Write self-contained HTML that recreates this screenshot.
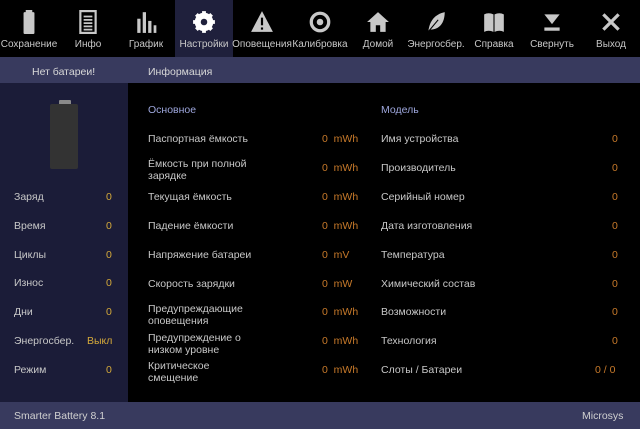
<!DOCTYPE html><html><head><meta charset="utf-8"><style>
*{margin:0;padding:0;box-sizing:border-box}
body{width:640px;height:429px;background:#000;font-family:"Liberation Sans","DejaVu Sans",sans-serif;color:#c8c8c8;position:relative;overflow:hidden;font-size:10px}
.nav{position:absolute;top:0;left:0;width:640px;height:57px;background:#000}
.it{position:absolute;top:0;width:58px;height:57px;text-align:center}
.it.sel{background:#1f203c}
.it svg{position:absolute;left:18px;top:10px;width:22px;height:24px}
.it span{position:absolute;left:-10px;right:-10px;top:39px;font-size:10px;color:#c8c8c8;white-space:nowrap}
.strip{position:absolute;top:57px;left:0;width:640px;height:26px;background:#383a5e;color:#d8d8d8}
.left{position:absolute;top:83px;left:0;width:128px;height:319px;background:#1b1c38}
.foot{position:absolute;top:402px;left:0;width:640px;height:27px;background:#383a5e;color:#d0d0d0}
.t{position:absolute;font-size:10.5px;line-height:12px;white-space:nowrap;margin-top:2px}
.o{color:#c87a2a}.y{color:#d4a93a}.h{color:#9da6dc}
</style></head><body>
<div class="nav">
<div class="it" style="left:0"><svg viewBox="0 0 20 22"><rect x="7" y="0" width="6" height="3" fill="#c8c8c8"/><rect x="5" y="2" width="10" height="20" rx="1" fill="#c8c8c8"/></svg><span>Сохранение</span></div>
<div class="it" style="left:59px"><svg viewBox="0 0 20 22"><rect x="3" y="1" width="14" height="20" fill="none" stroke="#c8c8c8" stroke-width="2"/><path d="M6 6h8M6 9h8M6 12h8M6 15h8M6 18h8" stroke="#c8c8c8" stroke-width="1.6"/></svg><span>Инфо</span></div>
<div class="it" style="left:117px"><svg viewBox="0 0 20 22"><rect x="2" y="8" width="3" height="13" fill="#c8c8c8"/><rect x="7" y="2" width="3" height="19" fill="#c8c8c8"/><rect x="12" y="10" width="3" height="11" fill="#c8c8c8"/><rect x="17" y="14" width="2.5" height="7" fill="#c8c8c8"/></svg><span>График</span></div>
<div class="it sel" style="left:175px"><svg viewBox="0 0 20 22"><circle cx="10" cy="11" r="6.5" fill="none" stroke="#fff" stroke-width="4"/><g stroke="#fff" stroke-width="3.5"><path d="M10 1v20M0 11h20M3 4l14 14M17 4L3 18"/></g><circle cx="10" cy="11" r="3" fill="#1f203c"/></svg><span>Настройки</span></div>
<div class="it" style="left:233px"><svg viewBox="0 0 20 22"><path d="M10 1L20 20H0z" fill="#c8c8c8"/><rect x="9" y="7" width="2" height="7" fill="#000"/><rect x="9" y="16" width="2" height="2" fill="#000"/></svg><span>Оповещения</span></div>
<div class="it" style="left:291px"><svg viewBox="0 0 20 22"><circle cx="10" cy="11" r="8" fill="none" stroke="#c8c8c8" stroke-width="3"/><circle cx="10" cy="11" r="3" fill="#c8c8c8"/></svg><span>Калибровка</span></div>
<div class="it" style="left:349px"><svg viewBox="0 0 20 22"><path d="M10 2L0 11h3v9h5v-6h4v6h5v-9h3z" fill="#c8c8c8"/></svg><span>Домой</span></div>
<div class="it" style="left:407px"><svg viewBox="0 0 20 22"><path d="M3 20C4 10 9 4 18 2C18 12 13 18 5 18z" fill="#c8c8c8"/><path d="M2 21L12 9" stroke="#000" stroke-width="1"/></svg><span>Энергосбер.</span></div>
<div class="it" style="left:465px"><svg viewBox="0 0 20 22"><path d="M1 4Q5 2 9.5 4V20Q5 18 1 20z M10.5 4Q15 2 19 4V20Q15 18 10.5 20z" fill="#c8c8c8"/></svg><span>Справка</span></div>
<div class="it" style="left:523px"><svg viewBox="0 0 20 22"><path d="M3 4h14l-7 9z" fill="#c8c8c8"/><rect x="3" y="16" width="14" height="3" fill="#c8c8c8"/></svg><span>Свернуть</span></div>
<div class="it" style="left:582px"><svg viewBox="0 0 20 22"><path d="M3 4l14 14M17 4L3 18" stroke="#c8c8c8" stroke-width="3"/></svg><span>Выход</span></div>
</div>
<div class="strip"><div class="t" style="left:32px;top:7px">Нет батареи!</div><div class="t" style="left:148px;top:7px">Информация</div></div>
<div class="left">
<div style="position:absolute;left:59px;top:17px;width:12px;height:5px;background:#8a8a8a;border-radius:1px"></div>
<div style="position:absolute;left:50px;top:21px;width:28px;height:65px;background:#333;border-radius:2px"></div>
</div>
<div class="t" style="left:14px;top:189px">Заряд</div><div class="t y" style="left:106px;top:189px">0</div>
<div class="t" style="left:14px;top:218px">Время</div><div class="t y" style="left:106px;top:218px">0</div>
<div class="t" style="left:14px;top:247px">Циклы</div><div class="t y" style="left:106px;top:247px">0</div>
<div class="t" style="left:14px;top:275px">Износ</div><div class="t y" style="left:106px;top:275px">0</div>
<div class="t" style="left:14px;top:304px">Дни</div><div class="t y" style="left:106px;top:304px">0</div>
<div class="t" style="left:14px;top:333px">Энергосбер.</div><div class="t y" style="left:87px;top:333px">Выкл</div>
<div class="t" style="left:14px;top:362px">Режим</div><div class="t y" style="left:106px;top:362px">0</div>

<div class="t h" style="left:148px;top:102px">Основное</div>
<div class="t h" style="left:381px;top:102px">Модель</div>

<div class="t" style="left:148px;top:131px">Паспортная ёмкость</div>
<div class="t" style="left:148px;top:156px">Ёмкость при полной<br>зарядке</div>
<div class="t" style="left:148px;top:189px">Текущая ёмкость</div>
<div class="t" style="left:148px;top:218px">Падение ёмкости</div>
<div class="t" style="left:148px;top:247px">Напряжение батареи</div>
<div class="t" style="left:148px;top:276px">Скорость зарядки</div>
<div class="t" style="left:148px;top:301px">Предупреждающие<br>оповещения</div>
<div class="t" style="left:148px;top:330px">Предупреждение о<br>низком уровне</div>
<div class="t" style="left:148px;top:358px">Критическое<br>смещение</div>

<div class="t o" style="left:322px;top:131px">0&nbsp; mWh</div>
<div class="t o" style="left:322px;top:160px">0&nbsp; mWh</div>
<div class="t o" style="left:322px;top:189px">0&nbsp; mWh</div>
<div class="t o" style="left:322px;top:218px">0&nbsp; mWh</div>
<div class="t o" style="left:322px;top:247px">0&nbsp; mV</div>
<div class="t o" style="left:322px;top:276px">0&nbsp; mW</div>
<div class="t o" style="left:322px;top:304px">0&nbsp; mWh</div>
<div class="t o" style="left:322px;top:333px">0&nbsp; mWh</div>
<div class="t o" style="left:322px;top:362px">0&nbsp; mWh</div>

<div class="t" style="left:381px;top:131px">Имя устройства</div>
<div class="t" style="left:381px;top:160px">Производитель</div>
<div class="t" style="left:381px;top:189px">Серийный номер</div>
<div class="t" style="left:381px;top:218px">Дата изготовления</div>
<div class="t" style="left:381px;top:247px">Температура</div>
<div class="t" style="left:381px;top:276px">Химический состав</div>
<div class="t" style="left:381px;top:304px">Возможности</div>
<div class="t" style="left:381px;top:333px">Технология</div>
<div class="t" style="left:381px;top:362px">Слоты / Батареи</div>
<div class="t o" style="left:612px;top:131px">0</div>
<div class="t o" style="left:612px;top:160px">0</div>
<div class="t o" style="left:612px;top:189px">0</div>
<div class="t o" style="left:612px;top:218px">0</div>
<div class="t o" style="left:612px;top:247px">0</div>
<div class="t o" style="left:612px;top:276px">0</div>
<div class="t o" style="left:612px;top:304px">0</div>
<div class="t o" style="left:612px;top:333px">0</div>
<div class="t o" style="left:595px;top:362px">0 / 0</div>

<div class="foot"><div class="t" style="left:14px;top:6px">Smarter Battery 8.1</div><div class="t" style="left:582px;top:6px">Microsys</div></div>
</body></html>
